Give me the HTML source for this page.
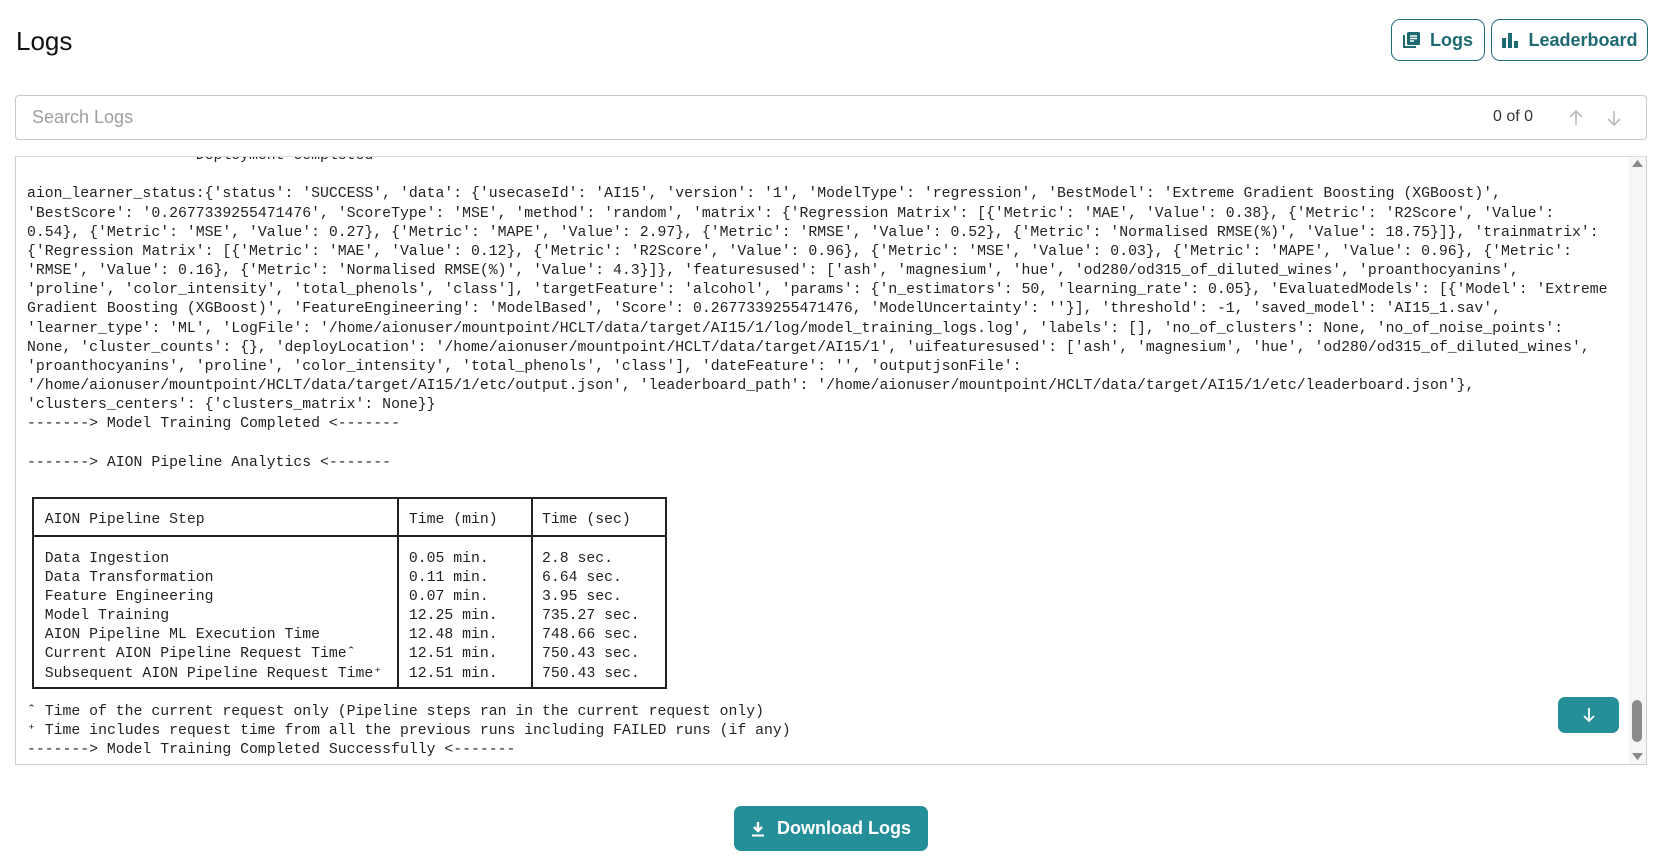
<!DOCTYPE html>
<html><head><meta charset="utf-8">
<style>
*{box-sizing:border-box;margin:0;padding:0}
body{width:1667px;height:863px;background:#fff;position:relative;overflow:hidden;font-family:"Liberation Sans",sans-serif;color:#212121}
.h{position:absolute;left:16px;top:26px;font-size:26px;color:#111}
.btn{position:absolute;top:19px;height:42px;border:1.5px solid #1d6f77;border-radius:9px;color:#1d6a72;font-weight:bold;font-size:18px;display:flex;align-items:center;justify-content:center;gap:9px}
.search{position:absolute;left:15px;top:95px;width:1632px;height:45px;border:1px solid #c8c8c8;border-radius:4px}
.ph{position:absolute;left:16px;top:11px;font-size:18px;color:#9e9e9e}
.cnt{position:absolute;left:1477px;top:12px;font-size:16px;color:#333}
.box{position:absolute;left:15px;top:156px;width:1632px;height:609px;border:1px solid #cfcfcf;border-top:1px solid #ddd;overflow:hidden}
pre{position:absolute;left:11px;top:-10px;font-family:"Liberation Mono",monospace;font-size:14.8px;line-height:19.17px;color:#222}
.hl{position:absolute;height:1.5px;background:#222}
.vl{position:absolute;width:1.5px;background:#222}
.sb{position:absolute;right:0;top:0;width:17px;height:100%;background:#f6f6f6}
.dl{position:absolute;left:734px;top:806px;width:194px;height:45px;background:#248e99;border-radius:7px;color:#fff;font-weight:bold;font-size:18px;display:flex;align-items:center;justify-content:center;gap:12px}
.down{position:absolute;left:1558px;top:697px;width:61px;height:36px;background:#248e99;border-radius:7px;display:flex;align-items:center;justify-content:center}
</style></head><body>
<div class="h">Logs</div>
<div class="btn" style="left:1391px;width:94px"><svg width="18" height="18" viewBox="0 0 18 18"><path d="M1 4v12h12" fill="none" stroke="#1d6a72" stroke-width="2"/><rect x="4" y="1" width="13" height="13" rx="1.5" fill="#1d6a72"/><path d="M7 5h7M7 7.5h7M7 10h4" stroke="#fff" stroke-width="1.5"/></svg>Logs</div>
<div class="btn" style="left:1491px;width:157px"><svg width="18" height="16" viewBox="0 0 18 16"><rect x="1" y="6" width="4" height="10" fill="#1d6a72"/><rect x="7" y="1" width="4" height="15" fill="#1d6a72"/><rect x="13" y="9" width="4" height="7" fill="#1d6a72"/></svg>Leaderboard</div>
<div class="search"><div class="ph">Search Logs</div><div class="cnt">0 of 0</div>
<svg style="position:absolute;left:1550px;top:12px" width="20" height="20" viewBox="0 0 20 20"><path d="M10 17V3M4 9l6-6 6 6" fill="none" stroke="#bbb" stroke-width="1.6"/></svg>
<svg style="position:absolute;left:1588px;top:12px" width="20" height="20" viewBox="0 0 20 20"><path d="M10 3v14M4 11l6 6 6-6" fill="none" stroke="#bbb" stroke-width="1.6"/></svg>
</div>
<div class="box">
<pre>------------------ Deployment completed ------------------

aion_learner_status:{'status': 'SUCCESS', 'data': {'usecaseId': 'AI15', 'version': '1', 'ModelType': 'regression', 'BestModel': 'Extreme Gradient Boosting (XGBoost)',
'BestScore': '0.2677339255471476', 'ScoreType': 'MSE', 'method': 'random', 'matrix': {'Regression Matrix': [{'Metric': 'MAE', 'Value': 0.38}, {'Metric': 'R2Score', 'Value':
0.54}, {'Metric': 'MSE', 'Value': 0.27}, {'Metric': 'MAPE', 'Value': 2.97}, {'Metric': 'RMSE', 'Value': 0.52}, {'Metric': 'Normalised RMSE(%)', 'Value': 18.75}]}, 'trainmatrix':
{'Regression Matrix': [{'Metric': 'MAE', 'Value': 0.12}, {'Metric': 'R2Score', 'Value': 0.96}, {'Metric': 'MSE', 'Value': 0.03}, {'Metric': 'MAPE', 'Value': 0.96}, {'Metric':
'RMSE', 'Value': 0.16}, {'Metric': 'Normalised RMSE(%)', 'Value': 4.3}]}, 'featuresused': ['ash', 'magnesium', 'hue', 'od280/od315_of_diluted_wines', 'proanthocyanins',
'proline', 'color_intensity', 'total_phenols', 'class'], 'targetFeature': 'alcohol', 'params': {'n_estimators': 50, 'learning_rate': 0.05}, 'EvaluatedModels': [{'Model': 'Extreme
Gradient Boosting (XGBoost)', 'FeatureEngineering': 'ModelBased', 'Score': 0.2677339255471476, 'ModelUncertainty': ''}], 'threshold': -1, 'saved_model': 'AI15_1.sav',
'learner_type': 'ML', 'LogFile': '/home/aionuser/mountpoint/HCLT/data/target/AI15/1/log/model_training_logs.log', 'labels': [], 'no_of_clusters': None, 'no_of_noise_points':
None, 'cluster_counts': {}, 'deployLocation': '/home/aionuser/mountpoint/HCLT/data/target/AI15/1', 'uifeaturesused': ['ash', 'magnesium', 'hue', 'od280/od315_of_diluted_wines',
'proanthocyanins', 'proline', 'color_intensity', 'total_phenols', 'class'], 'dateFeature': '', 'outputjsonFile':
'/home/aionuser/mountpoint/HCLT/data/target/AI15/1/etc/output.json', 'leaderboard_path': '/home/aionuser/mountpoint/HCLT/data/target/AI15/1/etc/leaderboard.json'},
'clusters_centers': {'clusters_matrix': None}}
-------> Model Training Completed <-------

-------> AION Pipeline Analytics <-------


  AION Pipeline Step                       Time (min)     Time (sec)

  Data Ingestion                           0.05 min.      2.8 sec.
  Data Transformation                      0.11 min.      6.64 sec.
  Feature Engineering                      0.07 min.      3.95 sec.
  Model Training                           12.25 min.     735.27 sec.
  AION Pipeline ML Execution Time          12.48 min.     748.66 sec.
  Current AION Pipeline Request Timeˆ      12.51 min.     750.43 sec.
  Subsequent AION Pipeline Request Time⁺   12.51 min.     750.43 sec.

ˆ Time of the current request only (Pipeline steps ran in the current request only)
⁺ Time includes request time from all the previous runs including FAILED runs (if any)
-------> Model Training Completed Successfully <-------</pre>
<div class="hl" style="left:16px;top:340px;width:635px"></div>
<div class="hl" style="left:16px;top:378px;width:635px"></div>
<div class="hl" style="left:16px;top:530px;width:635px"></div>
<div class="vl" style="left:16px;top:340px;height:191px"></div>
<div class="vl" style="left:381px;top:340px;height:191px"></div>
<div class="vl" style="left:515px;top:340px;height:191px"></div>
<div class="vl" style="left:649px;top:340px;height:191px"></div>
<div class="sb">
<svg style="position:absolute;left:3px;top:2px" width="11" height="8"><path d="M0 8L5.5 1 11 8z" fill="#888"/></svg>
<div style="position:absolute;left:3px;top:543px;width:10px;height:42px;background:#8a8a8a;border-radius:5px"></div>
<svg style="position:absolute;left:3px;top:596px" width="11" height="8"><path d="M0 0L5.5 7 11 0z" fill="#888"/></svg>
</div>
</div>
<div class="down"><svg width="16" height="16" viewBox="0 0 16 16"><path d="M8 1v13M3 9l5 5 5-5" fill="none" stroke="#fff" stroke-width="1.8"/></svg></div>
<div class="dl"><svg width="14" height="16" viewBox="0 0 14 16"><path d="M7 1v9M3 6l4 4 4-4" fill="none" stroke="#fff" stroke-width="2.4"/><rect x="1" y="13.5" width="12" height="2" fill="#fff"/></svg>Download Logs</div>
</body></html>
